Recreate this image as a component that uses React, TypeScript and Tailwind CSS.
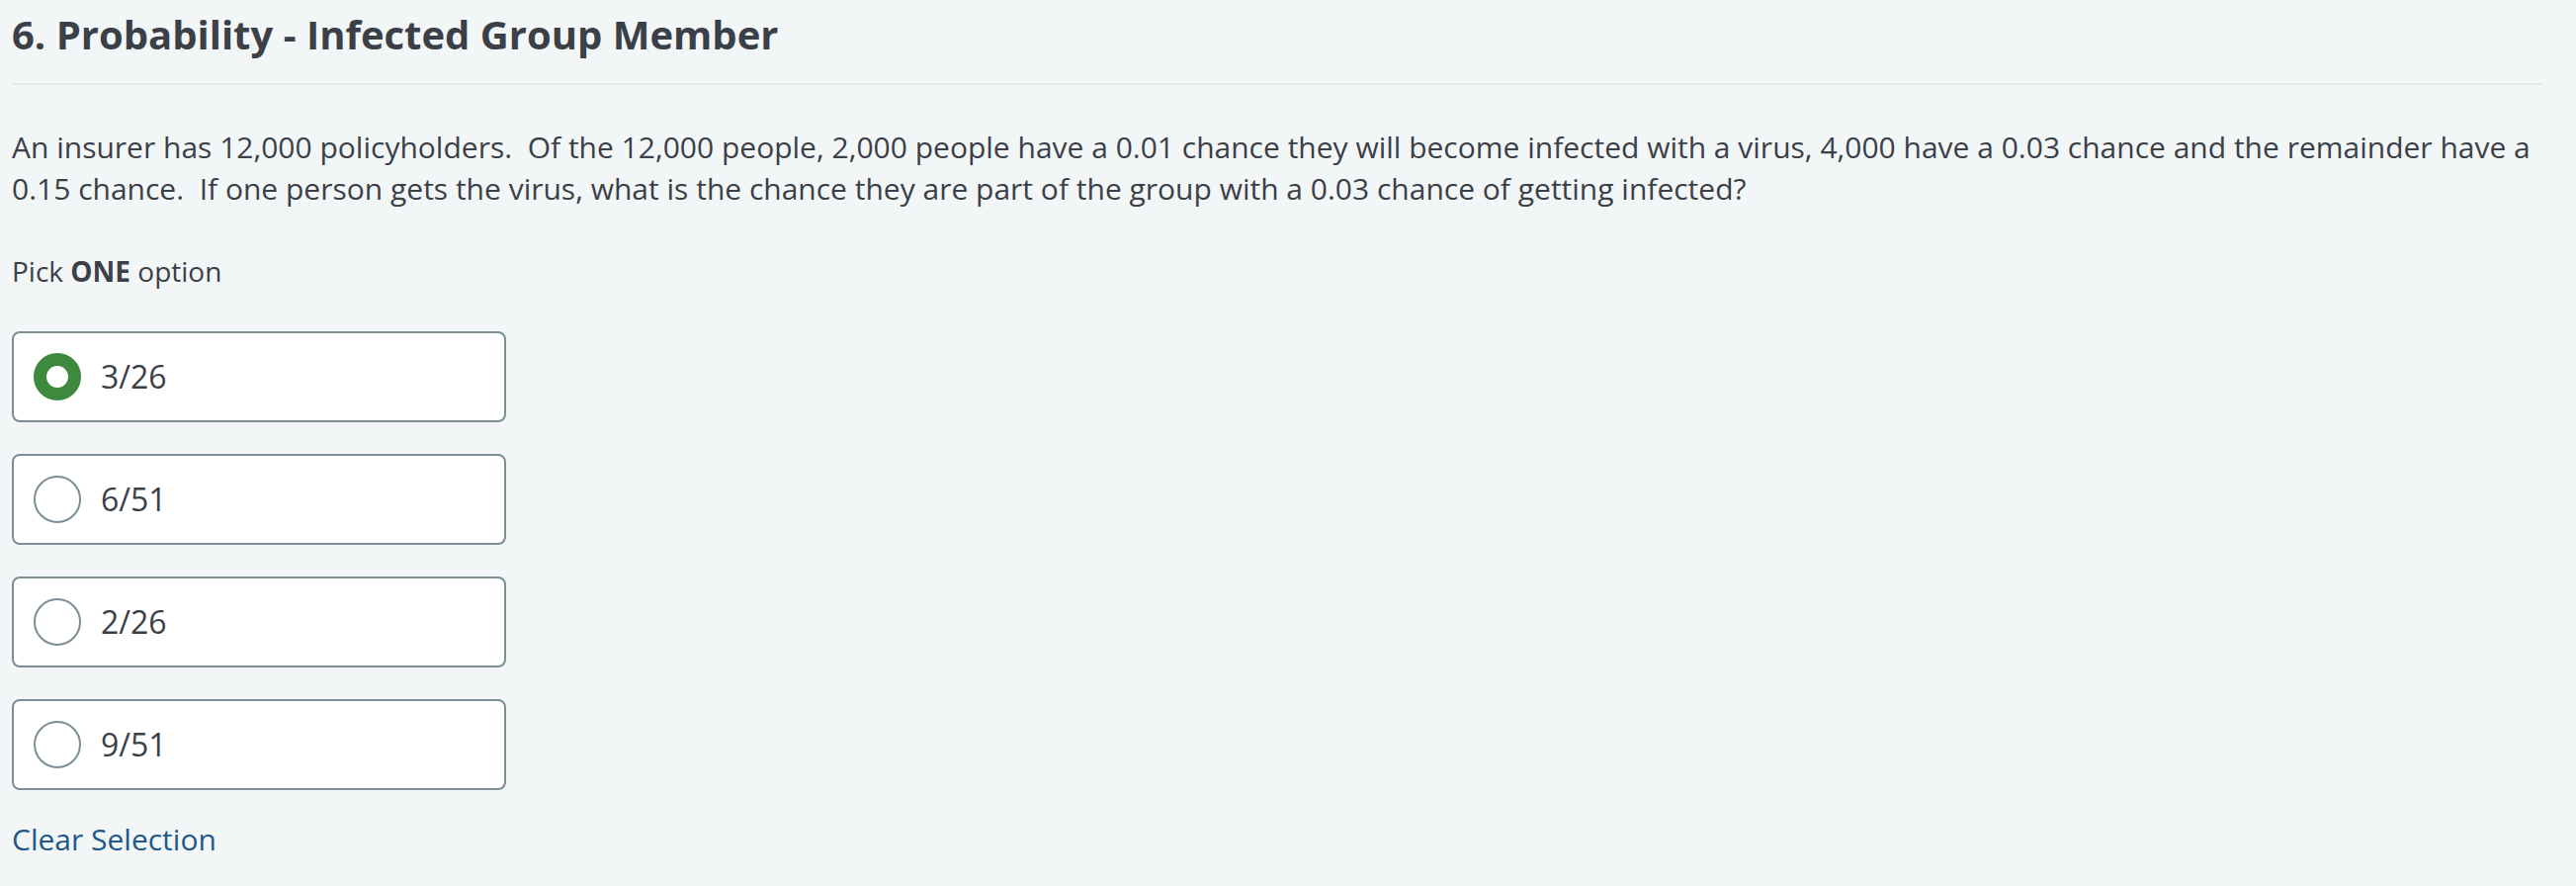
import React, { useState } from 'react';

const options = ['3/26', '6/51', '2/26', '9/51'];

const App: React.FC = () => {
  const [selected, setSelected] = useState<number | null>(0);

  return (
    <div
      className="min-h-screen w-full bg-[#f3f6f7] text-[#3b3f47] pl-[12px] pr-[33px]"
      style={{ fontFamily: '"Open Sans", "Liberation Sans", sans-serif' }}
    >
      <div className="pt-[11px] pb-[25px] border-b-2 border-[#e6eaec]">
        <h1 className="text-[40px] leading-[48px] font-bold">6. Probability - Infected Group Member</h1>
      </div>

      <p className="mt-[42px] text-[30px] leading-[42px]">
        An insurer has 12,000 policyholders.&nbsp; Of the 12,000 people, 2,000 people have a 0.01 chance they will become
        infected with a virus, 4,000 have a 0.03 chance and the remainder have a 0.15 chance.&nbsp; If one person gets the
        virus, what is the chance they are part of the group with a 0.03 chance of getting infected?
      </p>

      <p className="mt-[41px] text-[28px] leading-[42px]">
        Pick <span className="font-bold">ONE</span> option
      </p>

      <div className="mt-[40px] flex flex-col gap-[32px]">
        {options.map((opt, i) => (
          <button
            key={opt}
            onClick={() => setSelected(i)}
            className="w-[500px] h-[92px] flex items-center gap-[20px] px-[20px] bg-white border-2 border-[#7b8e95] rounded-[8px] text-left"
          >
            {selected === i ? (
              <span className="w-[48px] h-[48px] rounded-full border-[13px] border-[#3d8a3e] bg-white shrink-0" />
            ) : (
              <span className="w-[48px] h-[48px] rounded-full border-2 border-[#7b8e95] bg-white shrink-0" />
            )}
            <span className="text-[32px] leading-[44px]">{opt}</span>
          </button>
        ))}
      </div>

      <button
        onClick={() => setSelected(null)}
        className="mt-[28px] text-[30px] leading-[44px] text-[#21588b]"
      >
        Clear Selection
      </button>
    </div>
  );
};

export default App;
